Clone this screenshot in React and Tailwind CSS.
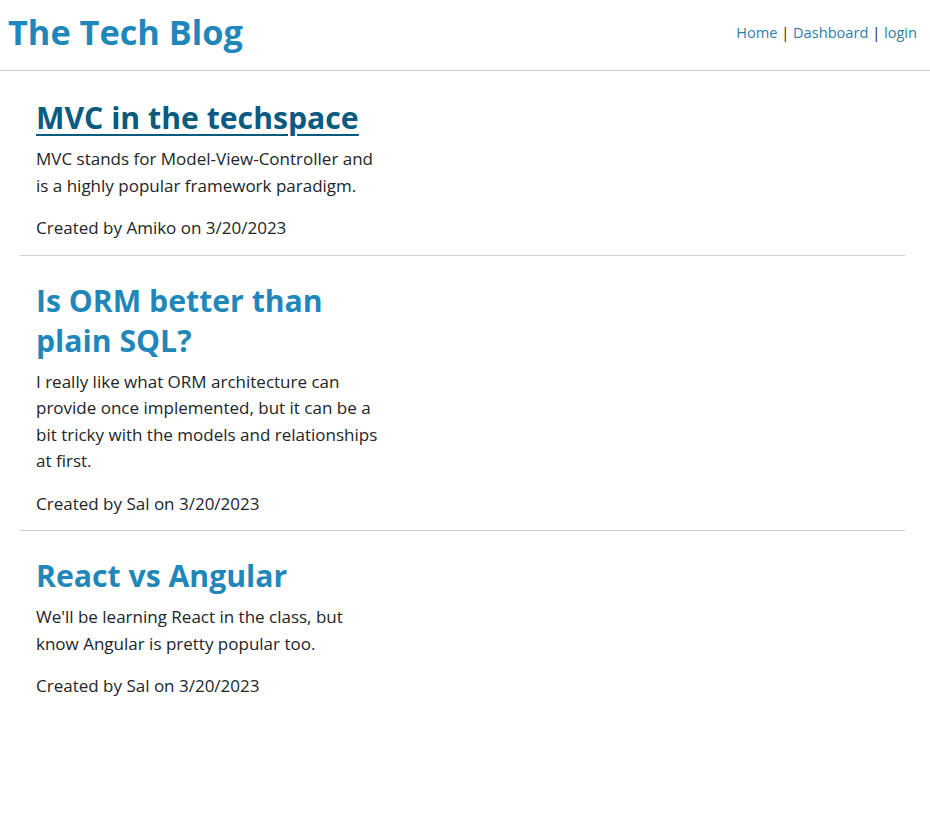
const POSTS = [
  {
    id: 1,
    title: 'MVC in the techspace',
    body: 'MVC stands for Model-View-Controller and is a highly popular framework paradigm.',
    author: 'Amiko',
    date: '3/20/2023',
    active: true,
  },
  {
    id: 2,
    title: 'Is ORM better than plain SQL?',
    body: 'I really like what ORM architecture can provide once implemented, but it can be a bit tricky with the models and relationships at first.',
    author: 'Sal',
    date: '3/20/2023',
  },
  {
    id: 3,
    title: 'React vs Angular',
    body: "We'll be learning React in the class, but know Angular is pretty popular too.",
    author: 'Sal',
    date: '3/20/2023',
  },
]

export default function App() {
  return (
    <div className="min-h-screen bg-white text-[#212529] font-['Segoe_UI','Open_Sans',sans-serif]">
      {/* Header */}
      <header className="flex items-center justify-between h-[71px] pl-2 pr-[13px] border-b border-[#cfcfcf]">
        <h1 className="text-[34.3px] font-bold text-[#1f87b9] leading-none -mt-[6px]">The Tech Blog</h1>
        <nav className="text-[14.6px] text-[#21262b] -mt-[4px]">
          <a href="#" className="text-[#2d80ac]">Home</a> |{' '}
          <a href="#" className="text-[#2d80ac]">Dashboard</a> |{' '}
          <a href="#" className="text-[#2d80ac]">login</a>
        </nav>
      </header>

      {/* Posts */}
      <main className="ml-5 mr-[25px] mt-[2px]">
        {POSTS.map((post, i) => (
          <article
            key={post.id}
            className={`px-4 pt-[25px] pb-[13px] ${i < POSTS.length - 1 ? 'border-b border-[#cfcfcf]' : ''}`}
          >
            <div className="w-[345px]">
              <h2
                className={`text-[30.2px] font-bold leading-[40px] mb-[8px] ${
                  post.active ? 'text-[#0b5a80] underline underline-offset-[5px] decoration-2' : 'text-[#1f87b9]'
                }`}
              >
                <a href="#">{post.title}</a>
              </h2>
              <p className="text-[17px] leading-[26.5px] mb-[16px]">{post.body}</p>
              <p className="text-[17px] leading-[26.5px]">
                Created by {post.author} on {post.date}
              </p>
            </div>
          </article>
        ))}
      </main>
    </div>
  )
}
